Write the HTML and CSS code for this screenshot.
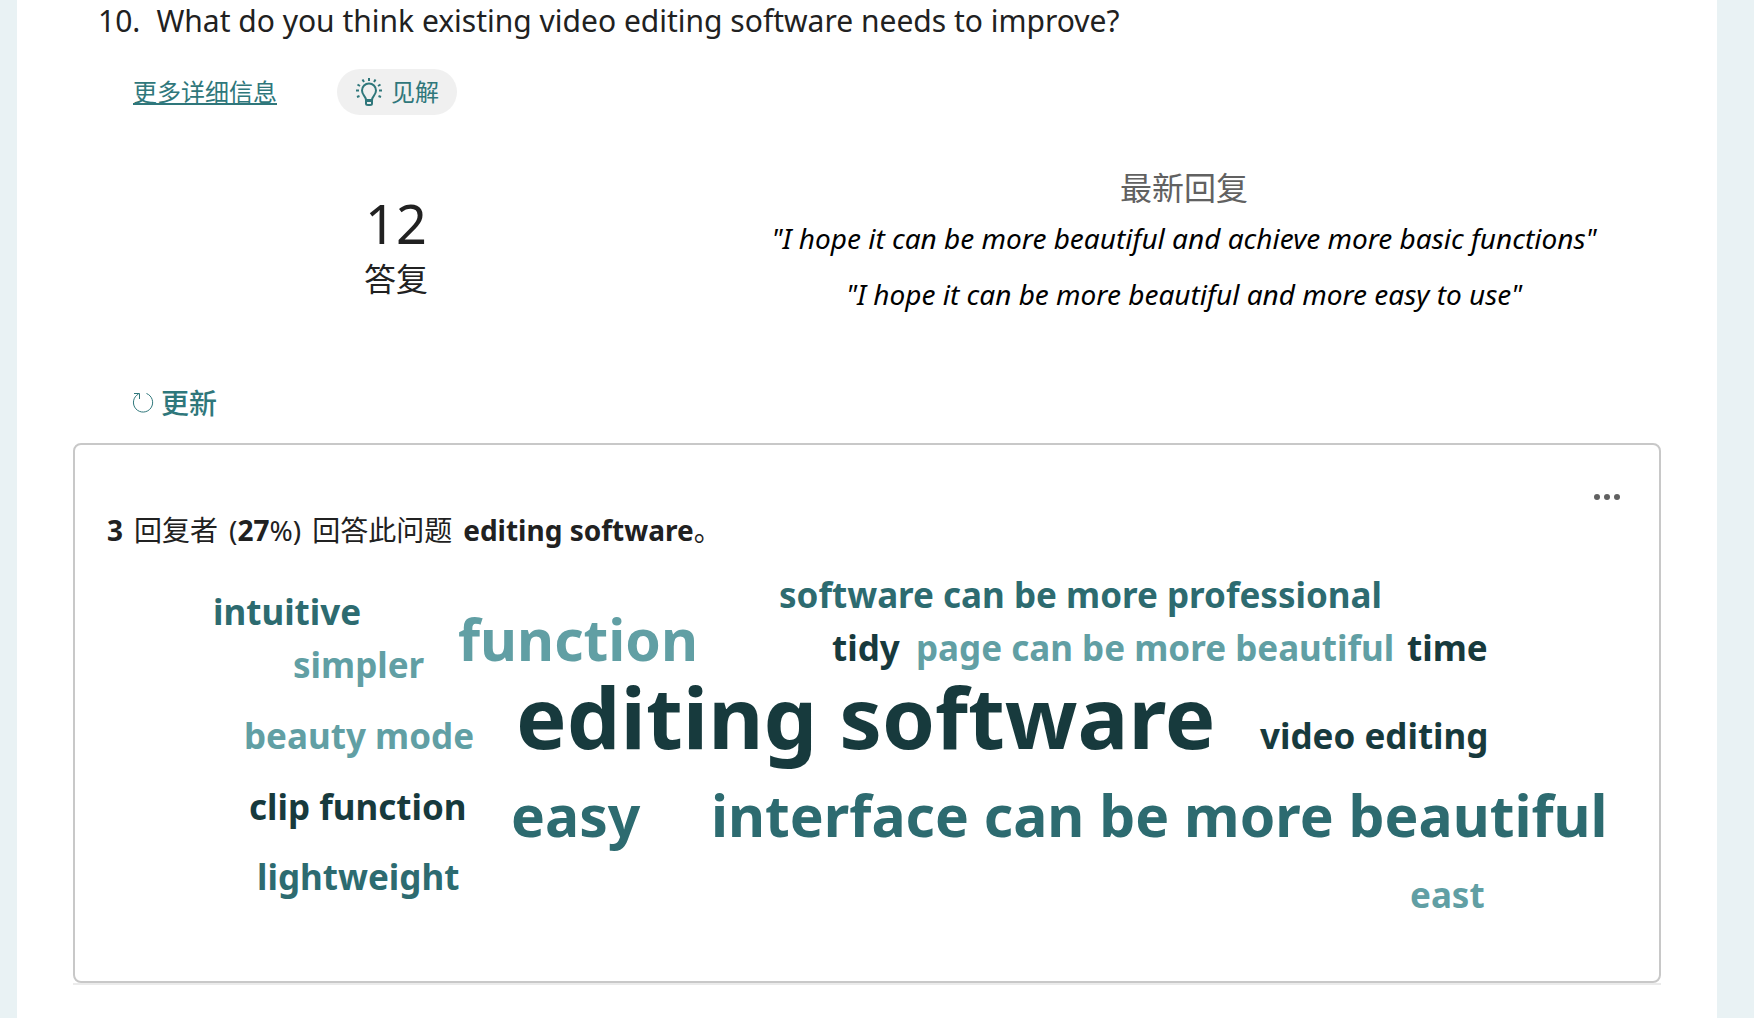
FILE: index.html
```html
<!DOCTYPE html>
<html lang="zh-CN">
<head>
<meta charset="utf-8">
<title>Form responses</title>
<link rel="stylesheet" href="styles.css">
</head>
<body>
<main class="sheet">
  <h1 class="question"><span>10.</span><span>What do you think existing video editing software needs to improve?</span></h1>
  <div class="actions">
    <a class="details" href="#details">更多详细信息</a>
    <button class="insights" type="button">
      <svg class="bulb" viewBox="0 0 28 28" aria-hidden="true"><path d="M11 22c0-4-4-4.500-4-9.500a7 7 0 0 1 14 0c0 5-4 5.500-4 9.500M11 22h6v3.500q0 1.500-2 1.500h-2q-2 0-2-1.500zM11 23h6"/><path d="M14 0v3M7.500 1.500l1.500 2.500M20.500 1.500L19 4M2.500 6.500l2.500 1.500M25.500 6.500L23 8M1 12.500h3M24 12.500h3M2 19l2.500-1M26 19l-2.500-1"/></svg>
      见解
    </button>
  </div>
  <section class="summary">
    <div class="count"><span class="number">12</span><span class="unit">答复</span></div>
    <div class="latest">
      <h2>最新回复</h2>
      <p>"I hope it can be more beautiful and achieve more basic functions"</p>
      <p>"I hope it can be more beautiful and more easy to use"</p>
    </div>
  </section>
  <button class="refresh" type="button">
    <svg class="arrow" viewBox="0 0 22 22" aria-hidden="true"><path d="M14.500 1.500A9.600 9.600 0 1 1 6.500 2M2 1.500H7.500V7"/></svg>
    更新
  </button>
  <div class="card-row">
    <section class="card">
      <button class="more" type="button" aria-label="More"><i></i><i></i><i></i></button>
      <p class="lead"><b>3</b> <span>回复者</span> <span>(<b>27</b>%)</span> <span>回答此问题</span> <span><b>editing software</b>。</span></p>
      <div class="cloud">
        <span class="word mid w1">intuitive</span>
        <span class="word light w2">simpler</span>
        <span class="word light w3">beauty mode</span>
        <span class="word dark w4">clip function</span>
        <span class="word mid w5">lightweight</span>
        <span class="word light large w6">function</span>
        <span class="word mid large w7">easy</span>
        <span class="word dark huge w8">editing software</span>
        <span class="word mid w9">software can be more professional</span>
        <span class="word dark w10">tidy</span>
        <span class="word light w11">page can be more beautiful</span>
        <span class="word dark w12">time</span>
        <span class="word dark w13">video editing</span>
        <span class="word mid large w14">interface can be more beautiful</span>
        <span class="word light w15">east</span>
      </div>
    </section>
  </div>
</main>
</body>
</html>
```
FILE: styles.css
```css
* { box-sizing: border-box; }
body {
  margin: 0;
  background: #e9f2f4;
  color: #212121;
  font-family: "Noto Sans", "Noto Sans CJK SC", sans-serif;
}
button { border: 0; padding: 0; background: none; font: inherit; color: #2f777b; }
h1, h2, p { margin: 0; font-weight: 400; }
svg { fill: none; stroke: currentColor; stroke-width: 2; }
.sheet {
  min-height: 100vh;
  margin: 0 37px 0 17px;
  padding: 0 56px 32px;
  background: #fff;
}
.question { display: flex; gap: 16px; padding-left: 25px; font-size: 30px; line-height: 42px; }
.actions { display: flex; align-items: center; gap: 60px; margin-top: 27px; padding-left: 60px; font-size: 24px; line-height: 46px; }
.details { color: #2f777b; text-decoration-thickness: 2px; text-underline-offset: 2px; }
.insights { display: flex; align-items: center; gap: 8px; height: 46px; padding: 0 18px; border-radius: 23px; background: #f0f0f0; }
.bulb { width: 28px; height: 28px; }
.summary { display: flex; margin-top: 51px; }
.count { display: flex; flex-direction: column; width: 646px; padding-top: 26px; text-align: center; }
.number { font-size: 54px; line-height: 62px; }
.unit { font-size: 32px; line-height: 50px; }
.latest { flex: 1; padding-right: 12px; text-align: center; }
.latest h2 { font-size: 32px; line-height: 44px; color: #616161; }
.latest p { font-size: 28px; line-height: 56px; font-style: italic; color: #000; }
.refresh { display: flex; align-items: center; gap: 7px; margin: 61px 0 0 59px; font-size: 28px; line-height: 40px; font-weight: 500; }
.arrow { width: 22px; height: 22px; stroke-width: 1; }
.card-row { margin-top: 20px; border-bottom: 2px solid #ebebeb; }
.card { position: relative; padding: 65px 32px 60px; border: 2px solid #c8c8c8; border-radius: 8px; }
.more { position: absolute; top: 49px; right: 39px; display: flex; gap: 4px; }
.more i { width: 6px; height: 6px; border-radius: 50%; background: #616161; }
.lead { display: flex; gap: 11px; font-size: 28px; line-height: 40px; }
.cloud { position: relative; height: 371px; }
.word { position: absolute; font-family: "Noto Sans", sans-serif; font-weight: 700; font-size: 35px; line-height: 48px; white-space: nowrap; }
.large { font-size: 57px; line-height: 72px; }
.huge { font-size: 85px; line-height: 84px; }
.mid { color: #2d6b70; }
.light { color: #619fa4; }
.dark { color: #173a3d; }
.w1 { left: 106px; top: 38px; }
.w2 { left: 186px; top: 91px; }
.w3 { left: 137px; top: 162px; }
.w4 { left: 142px; top: 233px; }
.w5 { left: 150px; top: 303px; }
.w6 { left: 351px; top: 53px; }
.w7 { left: 404px; top: 229px; }
.w8 { left: 409px; top: 124px; }
.w9 { left: 672px; top: 21px; }
.w10 { left: 725px; top: 74px; }
.w11 { left: 809px; top: 74px; }
.w12 { left: 1300px; top: 74px; }
.w13 { left: 1153px; top: 162px; }
.w14 { left: 604px; top: 229px; }
.w15 { left: 1303px; top: 321px; }
```
